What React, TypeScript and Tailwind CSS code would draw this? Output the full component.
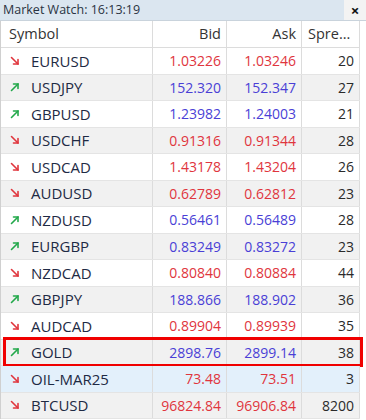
import React from 'react';

/**
 * One quote line of the market watch list.
 */
interface Quote {
  symbol: string;
  up: boolean;
  bid: string;
  ask: string;
  spread: number;
}

const QUOTES: Quote[] = [
  { symbol: 'EURUSD', up: false, bid: '1.03226', ask: '1.03246', spread: 20 },
  { symbol: 'USDJPY', up: true, bid: '152.320', ask: '152.347', spread: 27 },
  { symbol: 'GBPUSD', up: true, bid: '1.23982', ask: '1.24003', spread: 21 },
  { symbol: 'USDCHF', up: false, bid: '0.91316', ask: '0.91344', spread: 28 },
  { symbol: 'USDCAD', up: false, bid: '1.43178', ask: '1.43204', spread: 26 },
  { symbol: 'AUDUSD', up: false, bid: '0.62789', ask: '0.62812', spread: 23 },
  { symbol: 'NZDUSD', up: true, bid: '0.56461', ask: '0.56489', spread: 28 },
  { symbol: 'EURGBP', up: true, bid: '0.83249', ask: '0.83272', spread: 23 },
  { symbol: 'NZDCAD', up: false, bid: '0.80840', ask: '0.80884', spread: 44 },
  { symbol: 'GBPJPY', up: true, bid: '188.866', ask: '188.902', spread: 36 },
  { symbol: 'AUDCAD', up: false, bid: '0.89904', ask: '0.89939', spread: 35 },
  { symbol: 'GOLD', up: true, bid: '2898.76', ask: '2899.14', spread: 38 },
  { symbol: 'OIL-MAR25', up: false, bid: '73.48', ask: '73.51', spread: 3 },
  { symbol: 'BTCUSD', up: false, bid: '96824.84', ask: '96906.84', spread: 8200 },
];

const SELECTED = 'OIL-MAR25';
const HIGHLIGHTED = 'GOLD';

// Small diagonal tick arrow shown before each symbol
const TrendArrow: React.FC<{ up: boolean }> = ({ up }) => (
  <svg width="10" height="10" viewBox="0 0 10 10" className="shrink-0">
    {up ? (
      <g stroke="#22a84a" strokeWidth="1.6" fill="none" strokeLinecap="round">
        <path d="M1.5 8.5 L8 2" />
        <path d="M3.5 2 H8 V6.5" />
      </g>
    ) : (
      <g stroke="#e0353d" strokeWidth="1.6" fill="none" strokeLinecap="round">
        <path d="M1.5 1.5 L8 8" />
        <path d="M8 3.5 V8 H3.5" />
      </g>
    )}
  </svg>
);

const cell = 'flex items-center border-r border-[#dcdcdc] h-full';

const App: React.FC = () => (
  <div
    className="w-[366px] h-[420px] overflow-hidden bg-white text-[14px] text-[#1e2a44]"
    style={{ fontFamily: '"Segoe UI", "Open Sans", "Noto Sans", sans-serif' }}
  >
    {/* Title bar */}
    <div className="flex items-center h-[21px] border-b border-[#c9d3dc]">
      <div className="flex-1 h-full flex items-center pl-[3px] bg-[#dbe6f0] text-[#2a3342] text-[12.5px]">
        Market Watch: 16:13:19
      </div>
      <div className="w-[22px] h-full flex items-center justify-center bg-[#f3f3f3] text-[#111] text-[15px] font-bold leading-none">
        ×
      </div>
    </div>

    {/* Table */}
    <div className="w-[360px] border-l border-[#d0d0d0]">
      {/* Header */}
      <div className="grid grid-cols-[152px_74px_75px_58px] h-[27px] border-b border-[#dcdcdc] text-[#333] text-[14.5px]">
        <div className={`${cell} pl-[8px]`}>Symbol</div>
        <div className={`${cell} justify-end pr-[5px]`}>Bid</div>
        <div className={`${cell} justify-end pr-[5px]`}>Ask</div>
        <div className={`${cell} pl-[6px]`}>Spre...</div>
      </div>

      {QUOTES.map((q, i) => {
        const rowBg = q.symbol === SELECTED
          ? 'bg-[#e3f0fb]'
          : i % 2 === 1 ? 'bg-[#f1f1f1]' : 'bg-white';
        const priceColor = q.up ? 'text-[#4a3fd6]' : 'text-[#e0353d]';
        return (
          <div
            key={q.symbol}
            className={`relative grid grid-cols-[152px_74px_75px_58px] h-[26.5px] border-b border-[#e4e4e4] ${rowBg}`}
          >
            <div className={`${cell} pl-[9px] gap-[11px]`}>
              <TrendArrow up={q.up} />
              <span className="text-[15px]">{q.symbol}</span>
            </div>
            <div className={`${cell} justify-end pr-[5px] ${priceColor}`}>{q.bid}</div>
            <div className={`${cell} justify-end pr-[5px] ${priceColor}`}>{q.ask}</div>
            <div className={`${cell} justify-end pr-[5px] text-[#2a2a2a]`}>{q.spread}</div>
            {q.symbol === HIGHLIGHTED && (
              <div className="absolute top-[-3px] bottom-[-2px] left-[2px] right-[-3px] border-[3px] border-[#f00000] pointer-events-none" />
            )}
          </div>
        );
      })}
    </div>
  </div>
);

export default App;
